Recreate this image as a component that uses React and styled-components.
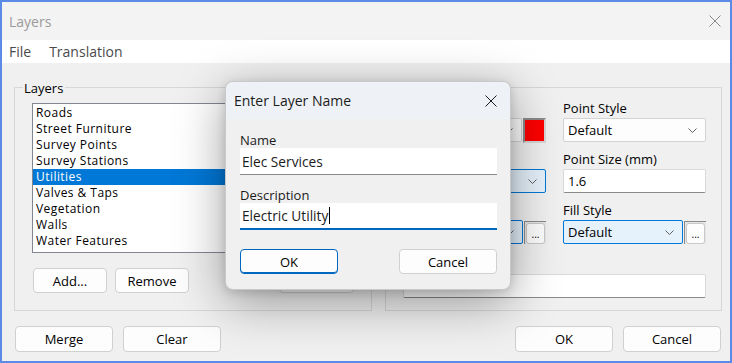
import React from "react";
import styled, { createGlobalStyle } from "styled-components";

const GlobalStyle = createGlobalStyle`
  html, body { margin: 0; padding: 0; background: #fff; }
  body { font-family: "Open Sans", "Noto Sans", sans-serif; }
  * { box-sizing: border-box; }
`;

const Window = styled.div`
  position: relative;
  width: 732px;
  height: 363px;
  border: 2px solid #5b8be6;
  background: #f0f0f0;
  display: flex;
  flex-direction: column;
  overflow: hidden;
`;

const TitleBar = styled.div`
  height: 38px;
  flex: none;
  display: flex;
  align-items: center;
  justify-content: space-between;
  padding: 0 9px 0 7px;
  background: #f3f3f3;
  color: #9a9a9a;
  font-size: 14px;
`;

const MenuBar = styled.div`
  height: 23px;
  flex: none;
  display: flex;
  align-items: center;
  gap: 18px;
  padding-left: 7px;
  background: #fff;
  color: #4a4a4a;
  font-size: 14px;
`;

const Body = styled.div`
  flex: 1;
  display: flex;
  flex-direction: column;
  padding: 17px 8px 9px 12px;
  font-size: 12px;
  color: #000;
`;

const Groups = styled.div`
  flex: 1;
  display: flex;
  gap: 13px;
`;

const GroupBox = styled.div`
  width: ${(p) => p.$width}px;
  display: flex;
  flex-direction: column;
`;

const GroupHead = styled.div`
  height: 16px;
  display: flex;
  font-size: 13px;
  line-height: 16px;
  &::before,
  &::after {
    content: "";
    align-self: flex-end;
    height: 8px;
    border-top: 1px solid #d7d7d7;
  }
  &::before {
    width: 8px;
    border-left: 1px solid #d7d7d7;
  }
  &::after {
    flex: 1;
    border-right: 1px solid #d7d7d7;
  }
`;

const GroupTitle = styled.span`
  padding: 0 2px 0 1px;
`;

const Frame = styled.div`
  flex: 1;
  display: flex;
  flex-direction: column;
  border: 1px solid #d7d7d7;
  border-top: 0;
  padding: ${(p) => p.$pad};
`;

const ListBox = styled.div`
  height: 150px;
  border: 1px solid #828790;
  background: #fff;
  padding-top: 1px;
  overflow: hidden;
`;

const ListItem = styled.div`
  height: 16px;
  line-height: 16px;
  padding-left: 3px;
  font-size: 12px;
  letter-spacing: 0.45px;
  white-space: nowrap;
  background: ${(p) => (p.$selected ? "#0078d7" : "transparent")};
  color: ${(p) => (p.$selected ? "#fff" : "#000")};
`;

const ButtonRow = styled.div`
  display: flex;
  align-items: center;
  gap: ${(p) => p.$gap || 8}px;
  margin-top: 15px;
`;

const Spacer = styled.div`
  flex: 1;
`;

const Button = styled.div`
  width: ${(p) => p.$width}px;
  height: ${(p) => p.$height || 26}px;
  margin-left: ${(p) => p.$ml || 0}px;
  margin-right: ${(p) => p.$mr || 0}px;
  display: flex;
  align-items: center;
  justify-content: center;
  background: #fdfdfd;
  border: 1px solid ${(p) => (p.$primary ? "#0067c0" : "#d0d0d0")};
  box-shadow: ${(p) => (p.$primary ? "inset 0 -1px 0 #0067c0" : "none")};
  border-radius: 4px;
  font-size: 13px;
  color: #000;
`;

const FieldGrid = styled.div`
  display: grid;
  grid-template-columns: 143px 143px;
  column-gap: 17px;
  row-gap: 9px;
`;

const Field = styled.div`
  display: flex;
  flex-direction: column;
  grid-column: ${(p) => (p.$wide ? "1 / span 2" : "auto")};
  margin-top: ${(p) => (p.$wide ? 3 : 0)}px;
`;

const FieldLabel = styled.div`
  height: 16px;
  line-height: 16px;
  margin-bottom: 2px;
  font-size: 13px;
  white-space: nowrap;
`;

const ControlRow = styled.div`
  display: flex;
  align-items: center;
  gap: 1px;
  height: 24px;
`;

const Combo = styled.div`
  flex: 1;
  height: 24px;
  display: flex;
  align-items: center;
  justify-content: space-between;
  padding: 0 8px 0 4px;
  border: 1px solid ${(p) => (p.$focus ? "#0078d7" : "#d3d3d3")};
  border-radius: 2px;
  background: ${(p) => (p.$focus ? "#e5f1fb" : "#fdfdfd")};
  font-size: 13px;
`;

const TextBox = styled.div`
  flex: 1;
  height: 24px;
  display: flex;
  align-items: center;
  padding-left: 4px;
  background: #fff;
  border: 1px solid #dadada;
  border-bottom-color: #8a8a8a;
  border-radius: 2px;
  font-size: 13px;
`;

const Swatch = styled.div`
  width: 23px;
  height: 25px;
  background: ${(p) => p.$color};
  border: 2px solid #8a8a8a;
  border-right-color: #d6d6d6;
  border-bottom-color: #d6d6d6;
`;

const DotsWell = styled.div`
  width: 22px;
  height: 23px;
  padding: 1px 1px 0 1px;
  background: #e6e6e6;
  border-top: 1px solid #8a8a8a;
  border-left: 1px solid #8a8a8a;
  display: flex;
`;

const Dots = styled.div`
  flex: 1;
  display: flex;
  align-items: flex-end;
  justify-content: center;
  padding-bottom: 4px;
  background: #fdfdfd;
  border: 1px solid #c8c8c8;
  border-radius: 3px;
  font-size: 10px;
  line-height: 10px;
`;

const Dialog = styled.div`
  position: absolute;
  left: 223px;
  top: 79px;
  width: 286px;
  height: 209px;
  display: flex;
  flex-direction: column;
  border: 1px solid rgba(0, 0, 0, 0.16);
  border-radius: 8px;
  overflow: hidden;
  background: #f0f0f0;
  box-shadow: 0 12px 50px rgba(0, 0, 0, 0.38), 0 2px 10px rgba(0, 0, 0, 0.14);
`;

const DialogTitle = styled.div`
  height: 37px;
  flex: none;
  display: flex;
  align-items: center;
  justify-content: space-between;
  padding: 0 13px 0 8px;
  background: #eef2f6;
  color: #1b1b1b;
  font-size: 14px;
`;

const DialogBody = styled.div`
  flex: 1;
  display: flex;
  flex-direction: column;
  padding: 13px 13px 0 14px;
`;

const DialogLabel = styled.div`
  height: 16px;
  line-height: 16px;
  font-size: 13px;
  color: #1b1b1b;
  margin-top: ${(p) => p.$mt || 0}px;
`;

const DialogInput = styled.div`
  height: 27px;
  display: flex;
  align-items: center;
  padding-left: 2px;
  background: #fff;
  border-bottom: ${(p) => (p.$focus ? "2px solid #0067c0" : "1px solid #8a8a8a")};
  font-size: 13.7px;
  color: #1b1b1b;
`;

const Caret = styled.span`
  display: inline-block;
  width: 1px;
  height: 17px;
  margin-left: 1px;
  background: #000;
`;

const DialogButtons = styled.div`
  display: flex;
  justify-content: space-between;
  margin-top: 19px;
`;

const Chevron = () => (
  <svg width="9" height="5" viewBox="0 0 9 5">
    <path d="M0.5 0.5 L4.5 4.5 L8.5 0.5" fill="none" stroke="#606060" strokeWidth="1" />
  </svg>
);

const CloseIcon = ({ size, color }) => (
  <svg width={size} height={size} viewBox="0 0 12 12">
    <path d="M0.5 0.5 L11.5 11.5 M11.5 0.5 L0.5 11.5" fill="none" stroke={color} strokeWidth="1" />
  </svg>
);

const layers = [
  "Roads",
  "Street Furniture",
  "Survey Points",
  "Survey Stations",
  "Utilities",
  "Valves & Taps",
  "Vegetation",
  "Walls",
  "Water Features",
];

export default function App() {
  return (
    <>
      <GlobalStyle />
      <Window>
        <TitleBar>
          <span>Layers</span>
          <CloseIcon size={12} color="#8a8a8a" />
        </TitleBar>
        <MenuBar>
          <span>File</span>
          <span>Translation</span>
        </MenuBar>
        <Body>
          <Groups>
            <GroupBox $width={358}>
              <GroupHead>
                <GroupTitle>Layers</GroupTitle>
              </GroupHead>
              <Frame $pad="7px 17px 0 17px">
                <ListBox>
                  {layers.map((name) => (
                    <ListItem key={name} $selected={name === "Utilities"}>
                      {name}
                    </ListItem>
                  ))}
                </ListBox>
                <ButtonRow>
                  <Button $width={74} $height={25} $ml={1}>Add...</Button>
                  <Button $width={74} $height={25}>Remove</Button>
                  <Spacer />
                  <Button $width={75} $height={25} />
                </ButtonRow>
              </Frame>
            </GroupBox>
            <GroupBox $width={337}>
              <GroupHead>
                <GroupTitle />
              </GroupHead>
              <Frame $pad="4px 15px 0 17px">
                <FieldGrid>
                  <Field>
                    <FieldLabel />
                    <ControlRow>
                      <Combo>
                        <span />
                        <Chevron />
                      </Combo>
                      <Swatch $color="#ff0000" />
                    </ControlRow>
                  </Field>
                  <Field>
                    <FieldLabel>Point Style</FieldLabel>
                    <ControlRow>
                      <Combo>
                        <span>Default</span>
                        <Chevron />
                      </Combo>
                    </ControlRow>
                  </Field>
                  <Field>
                    <FieldLabel />
                    <ControlRow>
                      <Combo $focus>
                        <span />
                        <Chevron />
                      </Combo>
                    </ControlRow>
                  </Field>
                  <Field>
                    <FieldLabel>Point Size (mm)</FieldLabel>
                    <ControlRow>
                      <TextBox>1.6</TextBox>
                    </ControlRow>
                  </Field>
                  <Field>
                    <FieldLabel />
                    <ControlRow>
                      <Combo $focus>
                        <span />
                        <Chevron />
                      </Combo>
                      <DotsWell>
                        <Dots>...</Dots>
                      </DotsWell>
                    </ControlRow>
                  </Field>
                  <Field>
                    <FieldLabel>Fill Style</FieldLabel>
                    <ControlRow>
                      <Combo $focus>
                        <span>Default</span>
                        <Chevron />
                      </Combo>
                      <DotsWell>
                        <Dots>...</Dots>
                      </DotsWell>
                    </ControlRow>
                  </Field>
                  <Field $wide>
                    <FieldLabel />
                    <ControlRow>
                      <TextBox />
                    </ControlRow>
                  </Field>
                </FieldGrid>
              </Frame>
            </GroupBox>
          </Groups>
          <ButtonRow $gap={10}>
            <Button $width={98} $ml={1}>Merge</Button>
            <Button $width={98}>Clear</Button>
            <Spacer />
            <Button $width={98}>OK</Button>
            <Button $width={98} $mr={1}>Cancel</Button>
          </ButtonRow>
        </Body>
        <Dialog>
          <DialogTitle>
            <span>Enter Layer Name</span>
            <CloseIcon size={12} color="#1b1b1b" />
          </DialogTitle>
          <DialogBody>
            <DialogLabel>Name</DialogLabel>
            <DialogInput>Elec Services</DialogInput>
            <DialogLabel $mt={12}>Description</DialogLabel>
            <DialogInput $focus>
              Electric Utility
              <Caret />
            </DialogInput>
            <DialogButtons>
              <Button $width={98} $height={25} $primary>OK</Button>
              <Button $width={98} $height={25}>Cancel</Button>
            </DialogButtons>
          </DialogBody>
        </Dialog>
      </Window>
    </>
  );
}
